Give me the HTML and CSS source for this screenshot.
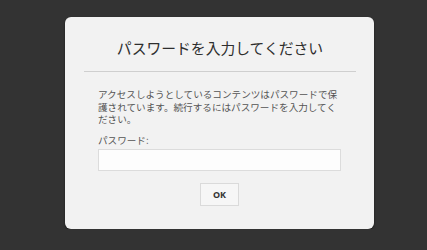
FILE: index.html
```html
<!DOCTYPE html>
<html lang="ja">
<head>
  <meta charset="UTF-8" />
  <meta name="viewport" content="width=device-width, initial-scale=1" />
  <title>パスワードを入力してください</title>
  <link rel="stylesheet" href="styles.css">
</head>
<body>
  <div class="dialog">
    <h1 class="dialog-title">パスワードを入力してください</h1>
    <div class="dialog-body">
      <p class="dialog-text">アクセスしようとしているコンテンツはパスワードで保護されています。続行するにはパスワードを入力してください。</p>
      <label class="field-label" for="password">パスワード:</label>
      <input class="field-input" id="password" type="password" />
      <div class="actions">
        <button class="btn-ok" type="button">OK</button>
      </div>
    </div>
  </div>
</body>
</html>
```

FILE: styles.css
```css
body {
  margin: 0;
  padding: 0;
  background-color: #333333;
  font-family: "Noto Sans CJK JP", "Noto Sans", sans-serif;
}

.dialog {
  width: 309px;
  height: 212px;
  margin: 17px 0 0 65px;
  box-sizing: border-box;
  background-color: #f2f2f2;
  border-radius: 6px;
  box-shadow: 0 1px 2px rgba(0, 0, 0, 0.6);
  padding: 0 18px 0 19px;
}

.dialog-title {
  margin: 0;
  padding: 20px 0 12px;
  font-size: 14.8px;
  font-weight: 400;
  line-height: 22px;
  color: #2e2e2e;
  text-align: center;
  border-bottom: 1px solid #cfcfcf;
}

.dialog-body {
  padding: 16px 15px 0 14px;
}

.dialog-text {
  margin: 0;
  font-size: 9.6px;
  line-height: 12.7px;
  color: #545454;
}

.field-label {
  display: block;
  margin-top: 8px;
  font-size: 9.6px;
  line-height: 13px;
  color: #545454;
}

.field-input {
  display: block;
  width: 100%;
  height: 22px;
  margin-top: 2px;
  box-sizing: border-box;
  border: 1px solid #dcdcdc;
  background-color: #fdfdfd;
  outline: none;
}

.actions {
  display: flex;
  justify-content: center;
  margin-top: 12px;
}

.btn-ok {
  width: 39px;
  height: 23px;
  padding: 0;
  border: 1px solid #dadada;
  background-color: #f6f6f6;
  font-family: "Noto Sans", sans-serif;
  font-size: 9px;
  font-weight: 700;
  color: #333;
}
```
